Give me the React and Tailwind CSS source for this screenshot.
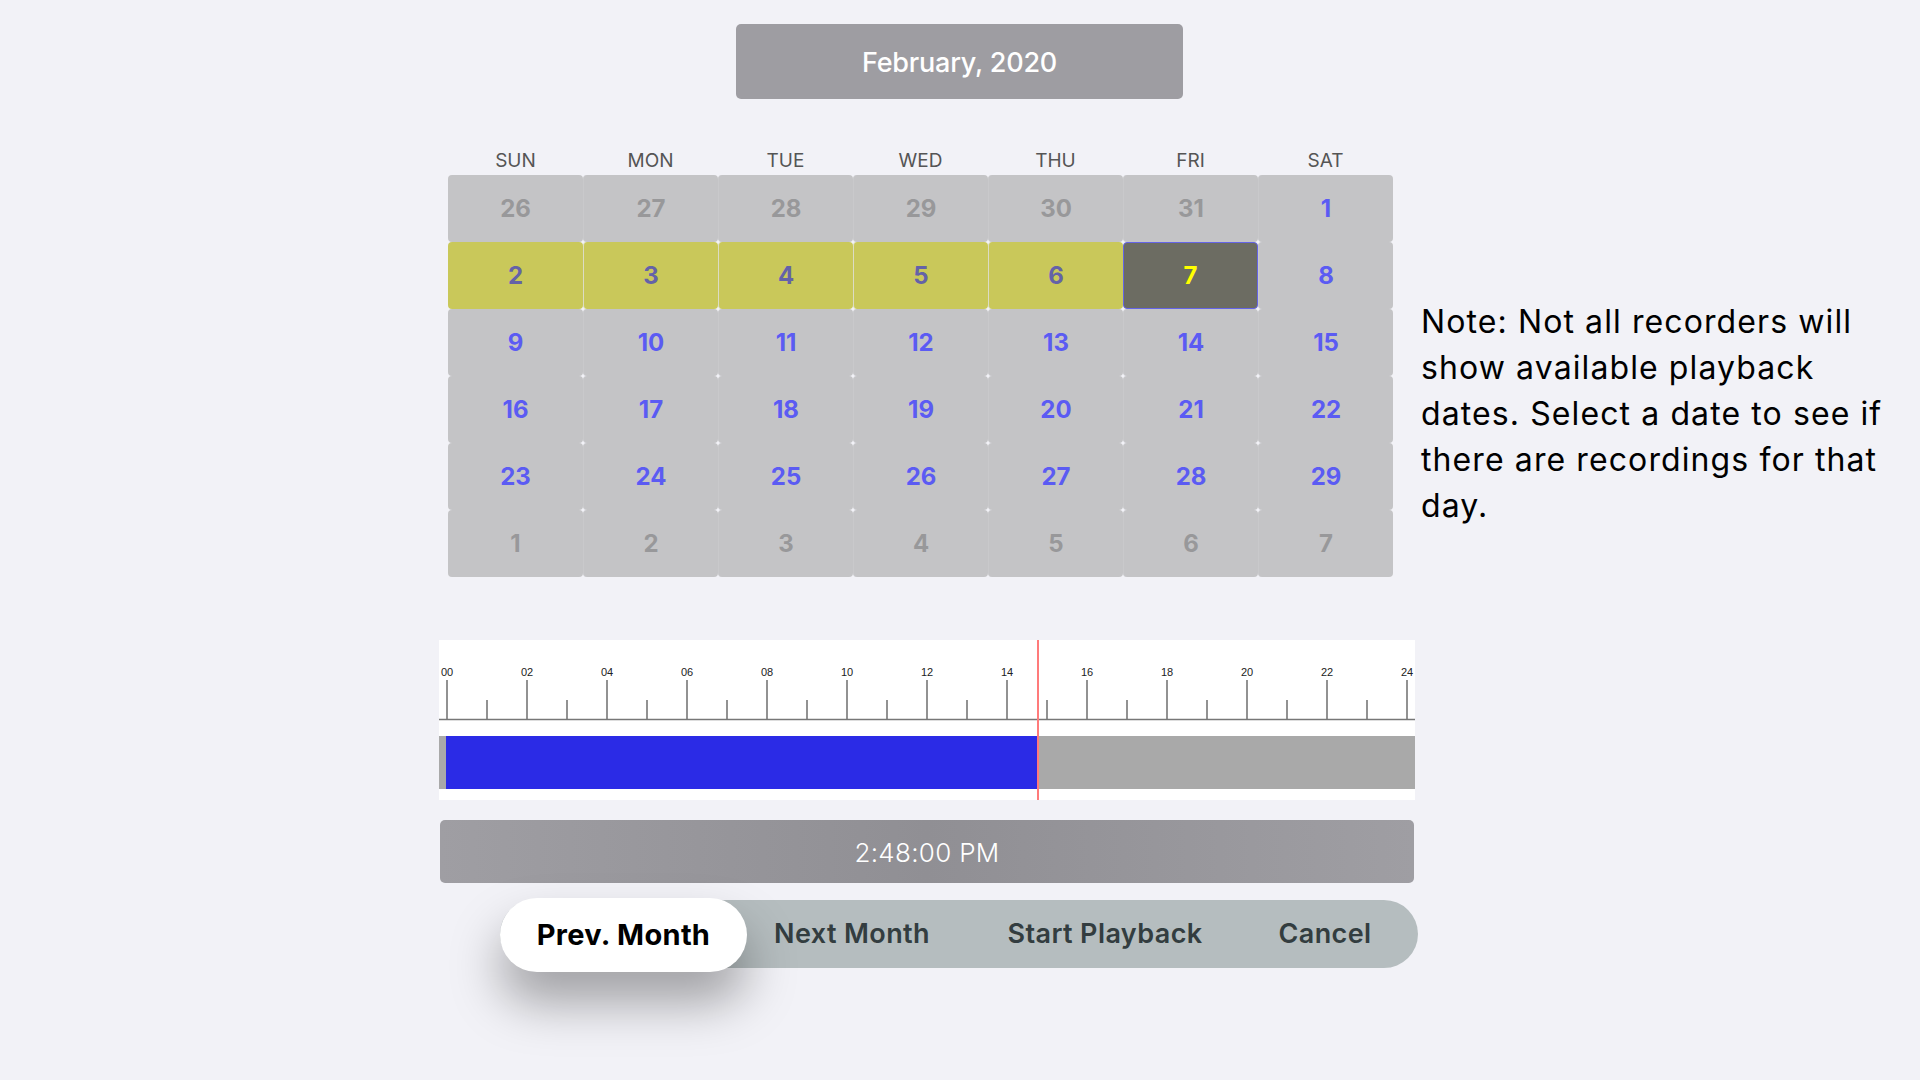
import React from "react";

const WEEKDAYS = ["SUN", "MON", "TUE", "WED", "THU", "FRI", "SAT"];

// kind: "out" = other month, "rec" = has recordings, "sel" = selected, "day" = plain
const ROWS = [
  [["26", "out"], ["27", "out"], ["28", "out"], ["29", "out"], ["30", "out"], ["31", "out"], ["1", "day"]],
  [["2", "rec"], ["3", "rec"], ["4", "rec"], ["5", "rec"], ["6", "rec"], ["7", "sel"], ["8", "day"]],
  [["9", "day"], ["10", "day"], ["11", "day"], ["12", "day"], ["13", "day"], ["14", "day"], ["15", "day"]],
  [["16", "day"], ["17", "day"], ["18", "day"], ["19", "day"], ["20", "day"], ["21", "day"], ["22", "day"]],
  [["23", "day"], ["24", "day"], ["25", "day"], ["26", "day"], ["27", "day"], ["28", "day"], ["29", "day"]],
  [["1", "out"], ["2", "out"], ["3", "out"], ["4", "out"], ["5", "out"], ["6", "out"], ["7", "out"]],
];

function DayCell({ label, kind, first }) {
  if (kind === "sel") {
    return (
      <div className="h-[67px] rounded-[4px] border border-[#6464e6] bg-[#6c6c62] flex items-center justify-center text-[24px] font-bold text-[#ffff00]">
        {label}
      </div>
    );
  }
  if (kind === "rec") {
    return (
      <div
        className={
          "h-[67px] rounded-[4px] bg-[#c9c85a] flex items-center justify-center text-[24px] font-bold text-[#6462a8] " +
          (first ? "" : "border-l border-[#dcdcc4]")
        }
      >
        {label}
      </div>
    );
  }
  return (
    <div
      className={
        "h-[67px] rounded-[4px] bg-[#c4c4c6] flex items-center justify-center text-[24px] font-bold " +
        (kind === "out" ? "text-[#98989a]" : "text-[#5b5bf3]") +
        (first ? "" : " border-l border-[#c9c9cb]")
      }
    >
      {label}
    </div>
  );
}

function Ruler() {
  const ticks = [];
  for (let h = 0; h <= 24; h++) {
    const x = 8 + h * 40;
    const major = h % 2 === 0;
    ticks.push(
      <line key={"t" + h} x1={x} x2={x} y1={major ? 40 : 60} y2={79} stroke="#777777" strokeWidth="1.6" />
    );
    if (major) {
      ticks.push(
        <text
          key={"l" + h}
          x={x}
          y={36}
          textAnchor="middle"
          fontSize="11"
          fill="#222222"
          fontFamily="'Liberation Sans', Arial, sans-serif"
        >
          {String(h).padStart(2, "0")}
        </text>
      );
    }
  }
  return (
    <svg width="976" height="96" className="block">
      {ticks}
      <line x1="0" x2="976" y1="79.5" y2="79.5" stroke="#777777" strokeWidth="1.6" />
    </svg>
  );
}

export default function App() {
  return (
    <div
      className="w-[1920px] h-[1080px] bg-[#f2f2f7] overflow-hidden"
      style={{ fontFamily: "Inter, 'Noto Sans', sans-serif" }}
    >
      <div className="pt-[24px] pl-[736px]">
        <div className="w-[447px] h-[75px] pt-[3px] rounded-[5px] bg-[#9e9da2] flex items-center justify-center text-white text-[27px] font-medium tracking-[-0.2px]">
          February, 2020
        </div>
      </div>

      <div className="flex pl-[448px] mt-[48px]">
        <div className="w-[945px]">
          <div className="grid grid-cols-7 h-[24px] pt-[2px] items-center text-[19px] text-[#555555]">
            {WEEKDAYS.map((d) => (
              <div key={d} className="text-center leading-[24px]">
                {d}
              </div>
            ))}
          </div>
          <div className="mt-[4px] flex flex-col">
            {ROWS.map((row, r) => (
              <div key={r} className="grid grid-cols-7">
                {row.map(([label, kind], c) => (
                  <DayCell key={c} label={label} kind={kind} first={c === 0} />
                ))}
              </div>
            ))}
          </div>
        </div>
        <div className="ml-[28px] mt-[152px] text-[32px] leading-[46px] text-black tracking-[1.1px]">
          Note: Not all recorders will
          <br />
          show available playback
          <br />
          dates. Select a date to see if
          <br />
          there are recordings for that
          <br />
          day.
        </div>
      </div>

      <div className="ml-[439px] mt-[63px] w-[976px] h-[160px] bg-white relative">
        <Ruler />
        <div className="h-[53px] bg-[#a9a9a9] flex">
          <div className="ml-[7px] w-[592px] h-full bg-[#2b2be6]" />
        </div>
        <div className="absolute left-[598px] top-0 w-[2px] h-[160px] bg-[#ff7b7b]" />
      </div>

      <div className="ml-[440px] mt-[20px] w-[974px] h-[63px] pt-[2px] rounded-[5px] bg-linear-to-r from-[#9f9ea3] via-[#908f94] to-[#9f9ea3] flex items-center justify-center text-white text-[26px] font-light tracking-[0.3px]">
        2:48:00 PM
      </div>

      <div className="ml-[500px] mt-[17px] w-[918px] h-[68px] pt-[1px] rounded-full bg-[#b5bdbf] flex items-center text-[27px] font-semibold text-[#333d40] tracking-[0.4px]">
        <button className="relative z-10 w-[247px] h-[74px] -my-[3px] pt-[1px] rounded-full bg-white text-black text-[29px] font-bold tracking-[0.3px] shadow-[0_30px_50px_rgba(0,0,0,0.34)]">
          Prev. Month
        </button>
        <button className="w-[210px] h-full">Next Month</button>
        <button className="w-[296px] h-full">Start Playback</button>
        <button className="w-[144px] h-full">Cancel</button>
      </div>
    </div>
  );
}
